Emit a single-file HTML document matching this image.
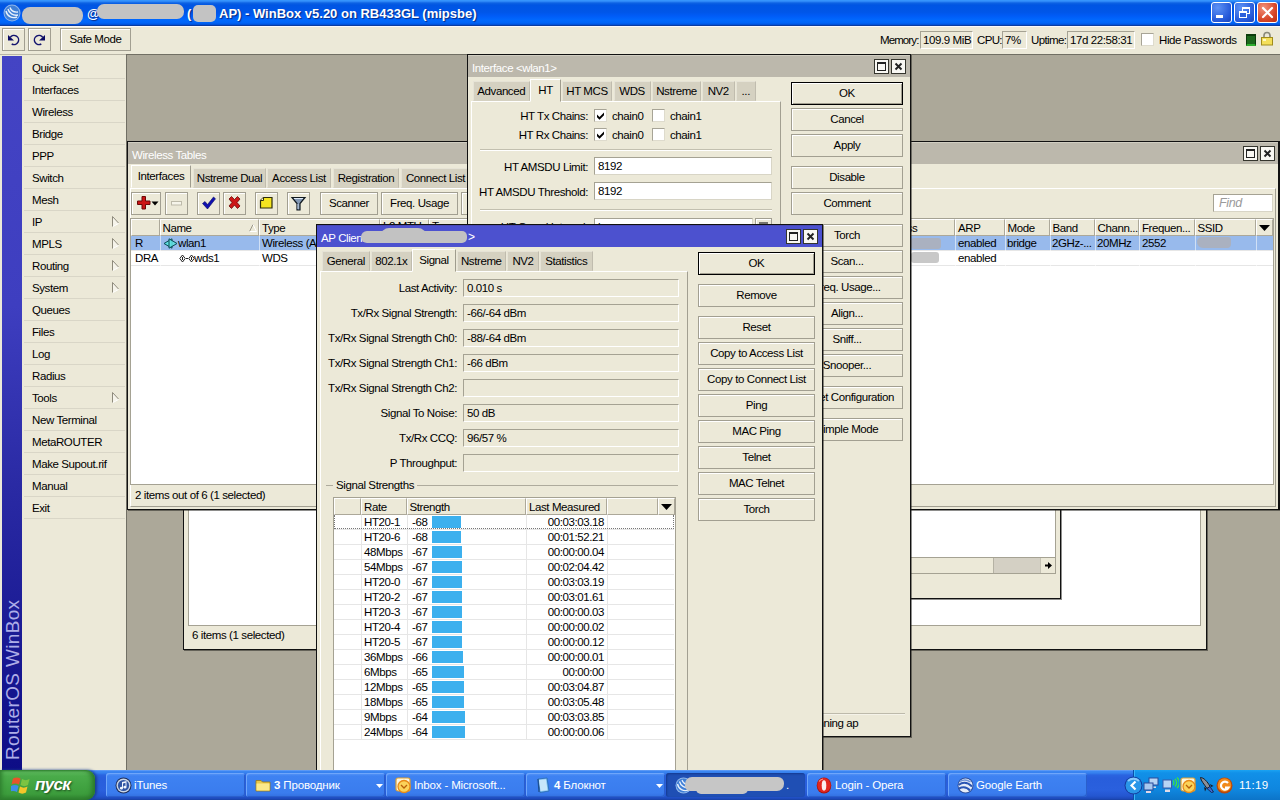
<!DOCTYPE html><html><head><meta charset="utf-8"><title>WinBox</title><style>
*{box-sizing:border-box;margin:0;padding:0}
html,body{width:1280px;height:800px;overflow:hidden;background:#aca899}
body{font-family:"Liberation Sans",sans-serif;font-size:11.5px;letter-spacing:-0.35px;color:#000;position:relative}
.abs{position:absolute}
.t{position:absolute;white-space:nowrap;line-height:14px;height:14px}
.r{text-align:right}
.c{text-align:center}
/* XP title */
#xpt{left:0;top:0;width:1280px;height:26px;background:linear-gradient(#3b9bff 0,#2c86f6 1.500px,#0d62e3 3px,#0055e3 5px,#0056e8 12px,#005cf7 16px,#0068fe 20px,#0064f6 23px,#0052dc 24.500px,#0a3ca0 25.500px,#0a3ca0 26px)}
#xpt .tt{left:437px;top:6px;color:#fff;font-weight:bold;font-size:13px;letter-spacing:0;line-height:16px;height:16px;text-shadow:1px 1px 1px #0a2a80}
.blob{position:absolute;background:#c3c3c3;border-radius:6px}
.xb{position:absolute;top:2px;width:21px;height:21px;border:1px solid #fff;border-radius:3px;background:radial-gradient(circle at 30% 25%,#5d92f5,#2457d8 70%,#1a44b8)}
.xb.cl{background:radial-gradient(circle at 30% 25%,#f0917a,#d8482a 60%,#b92f12)}
/* toolbar */
#tb{left:0;top:26px;width:1280px;height:28px;background:#ece9d8;box-shadow:inset 0 1px 0 #f8f8fc}
.btn{position:absolute;background:#ece9d8;border:1px solid #a29f91;box-shadow:inset 1px 1px 0 #fff;text-align:center;line-height:21px;height:23px;white-space:nowrap}
.btn.def{border-color:#000;box-shadow:inset 1px 1px 0 #fff,inset -1px -1px 0 #a29f91}
.fld{position:absolute;height:18px;background:#ece9d8;border:1px solid;border-color:#a5a293 #fff #fff #a5a293;line-height:16px;padding-left:3px;white-space:nowrap;overflow:hidden}
.fld.w{background:#fff;border-color:#a5a293 #d8d5c6 #d8d5c6 #a5a293}
/* sidebar */
#sb{left:2px;top:56px;width:20px;height:714px;background:linear-gradient(#4444c4 0,#3e3ec0 35%,#2a2aa4 60%,#0d0d86 100%)}
#sbt{left:3px;top:760px;width:220px;height:20px;transform-origin:0 0;transform:rotate(-90deg);color:#aeaee8;font-size:19px;letter-spacing:0.35px;line-height:20px;white-space:nowrap}
#menu{left:22px;top:55px;width:104px;height:715px;background:#ece9d8}
.mi{position:absolute;left:2px;width:101px;height:22px;border-bottom:1px solid #d9d6c7;padding-left:8px;line-height:22px;font-size:11.5px;letter-spacing:-0.4px}
.mi svg{position:absolute;right:6px;top:5px}
/* windows */
.win{position:absolute;background:#ece9d8;border:1px solid #111;box-shadow:1px 1px 0 rgba(30,30,25,.5);overflow:hidden}
.wt{position:absolute;left:0;top:0;right:0;height:22px;background:#bcb8ac;box-shadow:inset 0 1px 0 #d0cdc1;color:#fff;font-size:11.5px;letter-spacing:-0.4px;line-height:26px;padding-left:4px;white-space:nowrap}
.wt.act{background:#4c51cf;box-shadow:inset 0 1px 0 #4a4ab4;color:#fff}
.wb{position:absolute;top:4px;width:15px;height:15px;background:#f9f8f3;border:1px solid #35352d}
.wb.mx:after{content:"";box-sizing:border-box;position:absolute;left:2px;top:2px;width:9px;height:9px;border:1px solid #222;border-top-width:2px}
.wb svg{position:absolute;left:2px;top:2px}
.tab{position:absolute;height:20px;margin-top:-1px;background:#d5d1c1;border:1px solid;border-color:#e6e3d6 #c0bcae #d5d1c1 #e6e3d6;text-align:center;line-height:19px;font-size:11.5px;letter-spacing:-0.4px;white-space:nowrap}
.tab.on{background:#ece9d8;height:23px;margin-top:0;border-color:#fff #9f9c8e #ece9d8 #fff;line-height:21px;z-index:2}
.pane{position:absolute;border:1px solid;border-color:#fff #a29f91 #a29f91 #fff;background:#ece9d8}
.th{position:absolute;height:17px;background:#ece9d8;border:1px solid;border-color:#fff #aca899 #aca899 #fff;line-height:16px;padding-left:2px;white-space:nowrap;overflow:hidden;font-size:11.5px;letter-spacing:-0.4px}
.tbl{position:absolute;background:#fff;border:1px solid #a5a293;overflow:hidden}
.row{position:absolute;left:0;right:0;height:15px;border-bottom:1px solid #e6e6e6;line-height:14px;font-size:11.5px;letter-spacing:-0.4px;white-space:nowrap}
.row span{position:absolute;top:0;height:14px}
.row.sel{background:#98baec}
.vl{position:absolute;width:1px;background:#e6e6e6}
.bar{position:absolute;top:1px;height:12px;background:#3cb0ee}
.cb{position:absolute;width:13px;height:13px;background:#fff;border:1px solid;border-color:#a7a496 #dedbcd #dedbcd #a7a496}
.sep{position:absolute;height:2px;border-top:1px solid #c2bfaf;border-bottom:1px solid #fff}
/* taskbar */
#tk{left:0;top:770px;width:1280px;height:30px;background:linear-gradient(#79a9f6 0,#3d88f3 1px,#3580ee 3px,#2a64e1 5px,#285edc 8px,#2a60de 20px,#2456d0 26px,#1c48b8 29px,#183f9e 30px)}
#start{left:0;top:770px;width:95px;height:30px;border-radius:0 9px 9px 0;background:linear-gradient(#3c8f3c 0,#5dba5d 2px,#4aab4a 6px,#42a442 15px,#3c9c3c 24px,#2f802f 30px);box-shadow:inset -4px 0 5px -1px #2a762a,inset 3px 0 4px -1px #2f7f2f,2px 0 3px #1a3f90}
#start .t{left:35px;top:6px;color:#fff;font-weight:bold;font-style:italic;font-size:17px;letter-spacing:-0.7px;line-height:18px;height:18px;text-shadow:1px 1px 2px #1d4b1d}
.tkb{position:absolute;top:773px;height:24px;width:139px;border-radius:3px;background:linear-gradient(#5a98f8 0,#3e82f2 3px,#3a7cee 20px,#326fe0 24px);color:#fff;font-size:11.5px;letter-spacing:-0.15px;line-height:24px;white-space:nowrap;overflow:hidden;box-shadow:inset 1px 1px 0 #6ea6fb,inset -1px -1px 0 #2a5fcc}
.tkb.act{background:#1f4fb4;box-shadow:inset 1px 1px 2px #143a90}
.tkb b{position:absolute;left:28px;top:0;font-weight:normal}
#tray{left:1133px;top:770px;width:147px;height:30px;background:linear-gradient(#1ba3f2 0,#1190e8 3px,#0f86de 20px,#0c74c8 30px);border-left:1px solid #0a4fa8;box-shadow:inset 1px 0 0 #3bb6fa}
</style></head><body>
<div class="abs" style="left:126px;top:54px;width:1154px;height:716px;border-left:1px solid #716f64;border-top:1px solid #716f64"></div>
<div class="win" style="left:183px;top:300px;width:1024px;height:350px">
<div class="tbl" style="left:4px;top:20px;width:1013px;height:305px;border-color:#a5a293"></div>
<div class="t" style="left:8px;top:327px;font-size:11.500px;letter-spacing:-0.4px">6 items (1 selected)</div>
</div>
<div class="win" style="left:400px;top:380px;width:661px;height:219px">
<div class="tbl" style="left:4px;top:20px;width:651px;height:173px;border-color:#a5a293"></div>
<div class="abs" style="left:5px;top:176px;width:649px;height:16px;background:#ece9d8;border-top:1px solid #a5a293"></div>
<div class="abs" style="left:592px;top:177px;width:47px;height:15px;background:#d4d0c4;border-left:1px solid #b5b2a4"></div>
<div class="abs" style="left:639px;top:177px;width:15px;height:15px;background:#ece9d8;border-left:1px solid #c5c2b4"><svg width="14" height="15"><path d="M4 6.500h3V4l4 3.500-4 3.500V8.500H4z" fill="#000"/></svg></div>
</div>
<div class="abs" id="xpt">
<svg class="abs" style="left:3px;top:4px" width="18" height="18" viewBox="0 0 18 18"><circle cx="9" cy="9" r="8.5" fill="#8fb6ea"/><circle cx="9" cy="9" r="7.5" fill="#3f7fd6"/><path d="M3 7c1 5 6 8 11 6M5 5c1 4 5 7 10 6M7 3.500c1 3 4 5 8 4.500" stroke="#e8f1fc" stroke-width="1.400" fill="none"/></svg>
<div class="blob" style="left:22px;top:7px;width:61px;height:17px;border-radius:8px"></div>
<div class="t tt" style="left:87px">@</div>
<div class="blob" style="left:97px;top:4px;width:87px;height:15px;border-radius:7px"></div>
<div class="t tt" style="left:187px">(</div>
<div class="blob" style="left:193px;top:5px;width:23px;height:17px;border-radius:5px"></div>
<div class="t tt" style="left:219px">AP) - WinBox v5.20 on RB433GL (mipsbe)</div>
<div class="xb" style="left:1211px"><svg width="19" height="19"><rect x="4" y="12" width="7" height="3" fill="#fff"/></svg></div>
<div class="xb" style="left:1234px"><svg width="19" height="19"><rect x="7.500" y="4.500" width="7" height="6" fill="none" stroke="#fff"/><rect x="7" y="4" width="8" height="2" fill="#fff"/><rect x="4.500" y="8.500" width="7" height="6" fill="#2d60dc" stroke="#fff"/><rect x="4" y="8" width="8" height="2" fill="#fff"/></svg></div>
<div class="xb cl" style="left:1257px"><svg width="19" height="19"><path d="M5 5l9 9M14 5l-9 9" stroke="#fff" stroke-width="2.200" stroke-linecap="round"/></svg></div>
</div>
<div class="abs" id="tb">
<div class="btn" style="left:2px;top:2px;width:23px"><svg width="21" height="20" viewBox="0 0 21 20"><path d="M7.200 8.400A4.600 4.600 0 1 1 8.700 15" fill="none" stroke="#14146e" stroke-width="1.500"/><path d="M5 6v5.500h6z" fill="#0c0c64"/></svg></div>
<div class="btn" style="left:28px;top:2px;width:23px"><svg width="21" height="20" viewBox="0 0 21 20"><path d="M13.800 8.400A4.600 4.600 0 1 0 12.300 15" fill="none" stroke="#14146e" stroke-width="1.500"/><path d="M16 6v5.500h-6z" fill="#0c0c64"/></svg></div>
<div class="btn" style="left:60px;top:2px;width:71px;font-size:11.5px;letter-spacing:-0.4px">Safe Mode</div>
<div class="t" style="left:880px;top:7px;font-size:11.5px;letter-spacing:-0.9px">Memory:</div>
<div class="fld" style="left:920px;top:5px;width:53px;font-size:11.5px;letter-spacing:-0.4px;padding-left:2px">109.9 MiB</div>
<div class="t" style="left:977px;top:7px;font-size:11.5px;letter-spacing:-0.65px">CPU:</div>
<div class="fld" style="left:1002px;top:5px;width:25px;font-size:11.5px;letter-spacing:-0.4px;padding-left:2px">7%</div>
<div class="t" style="left:1031px;top:7px;font-size:11.5px;letter-spacing:-0.6px">Uptime:</div>
<div class="fld" style="left:1067px;top:5px;width:68px;font-size:11.5px;letter-spacing:-0.4px;padding-left:2px">17d 22:58:31</div>
<div class="cb" style="left:1141px;top:7px"></div>
<div class="t" style="left:1159px;top:7px;font-size:11.5px;letter-spacing:-0.4px">Hide Passwords</div>
<div class="abs" style="left:1246px;top:8px;width:10px;height:12px;background:#1d681d;border:1px solid #0c3c0c;border-top:2px solid #0c3c0c;border-bottom:2px solid #2fae2f"></div>
<svg class="abs" style="left:1260px;top:5px" width="14" height="15" viewBox="0 0 14 15"><path d="M4 7V4.500a3 3 0 0 1 6 0V7" fill="none" stroke="#8a8a7a" stroke-width="1.600"/><rect x="1.500" y="6.500" width="11" height="7.500" fill="#f4df5a" stroke="#a08c1c"/><rect x="3" y="8" width="3" height="2" fill="#fdf7c4"/></svg>
</div>
<div class="abs" style="left:0;top:54px;width:126px;height:1px;background:#b9b6a7"></div>
<div class="abs" style="left:0;top:55px;width:126px;height:715px;background:#ece9d8"></div>
<div class="abs" id="sb"></div><div class="abs" id="sbt">RouterOS WinBox</div>
<div class="abs" id="menu">
<div class="mi" style="top:2px">Quick Set</div>
<div class="mi" style="top:24px">Interfaces</div>
<div class="mi" style="top:46px">Wireless</div>
<div class="mi" style="top:68px">Bridge</div>
<div class="mi" style="top:90px">PPP</div>
<div class="mi" style="top:112px">Switch</div>
<div class="mi" style="top:134px">Mesh</div>
<div class="mi" style="top:156px">IP<svg width="7" height="11" viewBox="0 0 7 11"><path d="M.5 .5v10L6.500 7z" fill="#f6f4ea"/><path d="M.5 10.500V.5L6.500 7" fill="none" stroke="#8e8b7c"/><path d="M6.500 7.500L1 10.500" stroke="#fff"/></svg></div>
<div class="mi" style="top:178px">MPLS<svg width="7" height="11" viewBox="0 0 7 11"><path d="M.5 .5v10L6.500 7z" fill="#f6f4ea"/><path d="M.5 10.500V.5L6.500 7" fill="none" stroke="#8e8b7c"/><path d="M6.500 7.500L1 10.500" stroke="#fff"/></svg></div>
<div class="mi" style="top:200px">Routing<svg width="7" height="11" viewBox="0 0 7 11"><path d="M.5 .5v10L6.500 7z" fill="#f6f4ea"/><path d="M.5 10.500V.5L6.500 7" fill="none" stroke="#8e8b7c"/><path d="M6.500 7.500L1 10.500" stroke="#fff"/></svg></div>
<div class="mi" style="top:222px">System<svg width="7" height="11" viewBox="0 0 7 11"><path d="M.5 .5v10L6.500 7z" fill="#f6f4ea"/><path d="M.5 10.500V.5L6.500 7" fill="none" stroke="#8e8b7c"/><path d="M6.500 7.500L1 10.500" stroke="#fff"/></svg></div>
<div class="mi" style="top:244px">Queues</div>
<div class="mi" style="top:266px">Files</div>
<div class="mi" style="top:288px">Log</div>
<div class="mi" style="top:310px">Radius</div>
<div class="mi" style="top:332px">Tools<svg width="7" height="11" viewBox="0 0 7 11"><path d="M.5 .5v10L6.500 7z" fill="#f6f4ea"/><path d="M.5 10.500V.5L6.500 7" fill="none" stroke="#8e8b7c"/><path d="M6.500 7.500L1 10.500" stroke="#fff"/></svg></div>
<div class="mi" style="top:354px">New Terminal</div>
<div class="mi" style="top:376px">MetaROUTER</div>
<div class="mi" style="top:398px">Make Supout.rif</div>
<div class="mi" style="top:420px">Manual</div>
<div class="mi" style="top:442px">Exit</div>
</div>
<div class="win" style="left:127px;top:141px;width:1153px;height:369px;border-right-width:2px">
<div class="wt">Wireless Tables</div>
<div class="wb mx" style="left:1115px;top:4px"></div>
<div class="wb" style="left:1132px;top:4px"><svg width="13" height="13" style="left:0;top:0"><path d="M3.500 3.500l6 6M9.500 3.500l-6 6" stroke="#222" stroke-width="1.900"/></svg></div>
<div class="tab on" style="left:3px;top:23px;width:60px">Interfaces</div>
<div class="tab" style="left:65px;top:27px;width:73px">Nstreme Dual</div>
<div class="tab" style="left:139px;top:27px;width:64px">Access List</div>
<div class="tab" style="left:205px;top:27px;width:66px">Registration</div>
<div class="tab" style="left:273px;top:27px;width:69px">Connect List</div>
<div class="pane" style="left:2px;top:46px;width:1146px;height:319px"></div>
<div class="btn" style="left:3px;top:50px;width:30px;height:23px"><svg width="28" height="21"><path d="M5.500 8h4.500V3.500h3.500V8H18v3.500h-4.500V16H10v-4.500H5.500z" fill="#cc1414" stroke="#6a0808" stroke-width="1"/><path d="M19.500 8.500h7l-3.500 4z" fill="#000"/></svg></div>
<div class="btn" style="left:37px;top:50px;width:23px;height:23px"><svg width="21" height="21"><rect x="5.500" y="8.500" width="10" height="3.500" fill="#f6f4ea" stroke="#bdbaaa"/></svg></div>
<div class="btn" style="left:69px;top:50px;width:23px;height:23px"><svg width="21" height="21"><path d="M4.500 10.500l2.500-2 2.500 3L15.500 4l2 1.800L9.500 16z" fill="#1010b0" stroke="#080860" stroke-width="0.600"/></svg></div>
<div class="btn" style="left:95px;top:50px;width:23px;height:23px"><svg width="21" height="21"><path d="M5 6l2.500-2.500 3 3 3-3L16 6l-3 3.500 3 3.500-2.500 2.500-3-3.500-3 3.500L5 13l3-3.500z" fill="#cc1818" stroke="#6a0808" stroke-width="0.800"/></svg></div>
<div class="btn" style="left:127px;top:50px;width:23px;height:23px"><svg width="21" height="21"><path d="M4.500 7.500l3-3h8.500v10.500H4.500z" fill="#f4e420" stroke="#2c2c0c" stroke-width="1.200"/><path d="M4.500 7.500h3v-3" fill="#fffbd0" stroke="#2c2c0c"/></svg></div>
<div class="btn" style="left:159px;top:50px;width:23px;height:23px"><svg width="21" height="21"><path d="M4 4.500h13l-5 6v6.500h-3v-6.500z" fill="#8298b4" stroke="#10181f" stroke-width="1.200"/><path d="M6 5.500h9" stroke="#dfeaf8"/><path d="M10 11v5" stroke="#c4d4e8"/></svg></div>
<div class="btn" style="left:192px;top:50px;width:58px;height:23px;line-height:21px;font-size:11.5px;letter-spacing:-0.4px">Scanner</div>
<div class="btn" style="left:253px;top:50px;width:77px;height:23px;line-height:21px;font-size:11.5px;letter-spacing:-0.4px">Freq. Usage</div>
<div class="btn" style="left:333px;top:50px;width:60px;height:23px"></div>
<div class="fld w" style="left:1085px;top:52px;width:60px;font-style:italic;color:#9a9a9a;font-size:12.500px;padding-left:5px">Find</div>
<div class="tbl" style="left:2px;top:76px;width:1144px;height:267px"></div>
<div class="th" style="left:3px;top:77px;width:28.5px"></div>
<div class="th" style="left:31.5px;top:77px;width:99.5px">Name</div>
<div class="th" style="left:131px;top:77px;width:121px">Type</div>
<div class="th" style="left:252px;top:77px;width:49px;line-height:13px">L2 MTU</div>
<div class="th" style="left:301px;top:77px;width:91px;line-height:13px">Tx</div>
<div class="th" style="left:392px;top:77px;width:328.5px"></div>
<div class="th" style="left:720.5px;top:77px;width:106.5px">MAC Address</div>
<div class="th" style="left:827px;top:77px;width:49.5px">ARP</div>
<div class="th" style="left:876.5px;top:77px;width:45px">Mode</div>
<div class="th" style="left:921.5px;top:77px;width:45px">Band</div>
<div class="th" style="left:966.5px;top:77px;width:44.5px">Chann...</div>
<div class="th" style="left:1011px;top:77px;width:55.5px">Frequen...</div>
<div class="th" style="left:1066.5px;top:77px;width:61.5px">SSID</div>
<div class="th" style="left:1128px;top:77px;width:17px"></div>
<svg class="abs" style="left:121px;top:82px" width="8" height="8" viewBox="0 0 8 8"><path d="M.5 7.500L4 .5" stroke="#9a9788" fill="none"/><path d="M4 .5L7.500 7.500H.5" stroke="#fff" fill="none"/></svg>
<svg class="abs" style="left:1131px;top:83px" width="11" height="6"><path d="M0 0h11L5.500 6z" fill="#000"/></svg>
<div class="row sel" style="left:3px;top:94px;width:1142px"></div>
<div class="row" style="left:3px;top:109px;width:1142px"></div>
<div class="vl" style="left:31.5px;top:94px;height:30px;background:rgba(255,255,255,.55)"></div>
<div class="vl" style="left:131px;top:94px;height:30px;background:rgba(255,255,255,.55)"></div>
<div class="vl" style="left:252px;top:94px;height:30px;background:rgba(255,255,255,.55)"></div>
<div class="vl" style="left:301px;top:94px;height:30px;background:rgba(255,255,255,.55)"></div>
<div class="vl" style="left:827px;top:94px;height:30px;background:rgba(255,255,255,.55)"></div>
<div class="vl" style="left:876.5px;top:94px;height:30px;background:rgba(255,255,255,.55)"></div>
<div class="vl" style="left:921.5px;top:94px;height:30px;background:rgba(255,255,255,.55)"></div>
<div class="vl" style="left:966.5px;top:94px;height:30px;background:rgba(255,255,255,.55)"></div>
<div class="vl" style="left:1011px;top:94px;height:30px;background:rgba(255,255,255,.55)"></div>
<div class="vl" style="left:1066.5px;top:94px;height:30px;background:rgba(255,255,255,.55)"></div>
<div class="vl" style="left:1128px;top:94px;height:30px;background:rgba(255,255,255,.55)"></div>
<div class="t" style="left:7px;top:94px;font-size:11.5px;letter-spacing:-0.4px;">R</div>
<div class="t" style="left:50px;top:94px;font-size:11.5px;letter-spacing:-0.4px;">wlan1</div>
<div class="t" style="left:134px;top:94px;font-size:11.5px;letter-spacing:-0.4px;">Wireless (Atheros AR9300)</div>
<div class="t" style="left:830px;top:94px;font-size:11.5px;letter-spacing:-0.4px;">enabled</div>
<div class="t" style="left:879px;top:94px;font-size:11.5px;letter-spacing:-0.4px;">bridge</div>
<div class="t" style="left:924px;top:94px;font-size:11.5px;letter-spacing:-0.4px;">2GHz-...</div>
<div class="t" style="left:969px;top:94px;font-size:11.5px;letter-spacing:-0.4px;">20MHz</div>
<div class="t" style="left:1014px;top:94px;font-size:11.5px;letter-spacing:-0.4px;">2552</div>
<div class="t" style="left:7px;top:109px;font-size:11.5px;letter-spacing:-0.4px;">DRA</div>
<div class="t" style="left:66px;top:109px;font-size:11.5px;letter-spacing:-0.4px;">wds1</div>
<div class="t" style="left:134px;top:109px;font-size:11.5px;letter-spacing:-0.4px;">WDS</div>
<div class="t" style="left:830px;top:109px;font-size:11.5px;letter-spacing:-0.4px;">enabled</div>
<div class="blob" style="left:1069px;top:95px;width:34px;height:11px;border-radius:5px 3px 4px 6px;background:#aab1c0"></div>
<div class="blob" style="left:783px;top:96px;width:30px;height:11px;border-radius:3px;background:#aab1c0"></div>
<div class="blob" style="left:783px;top:110px;width:28px;height:11px;border-radius:3px;background:#c8c8c8"></div>
<svg class="abs" style="left:34.5px;top:95.5px" width="15" height="11" viewBox="0 0 15 11"><path d="M9 .8L1 5.500l8 4.700z" fill="#5ee0e0" stroke="#0c4a55" stroke-width="1"/><path d="M6 .8L14 5.500l-8 4.700z" fill="#5ee0e0" fill-opacity=".85" stroke="#0c4a55" stroke-width="1"/></svg>
<svg class="abs" style="left:51px;top:111.5px" width="16" height="9" viewBox="0 0 16 9"><path d="M3.500 1L.8 4.500 3.500 8 6.200 4.500zM12.500 1L9.800 4.500 12.500 8 15.200 4.500z" fill="#fff" stroke="#222" stroke-width="1"/><path d="M7 4.500h2" stroke="#222"/><path d="M3.500 3v3M12.500 3v3" stroke="#222"/></svg>
<div class="t" style="left:7px;top:346px;font-size:11.5px;letter-spacing:-0.4px">2 items out of 6 (1 selected)</div>
</div>
<div class="win" style="left:467px;top:54px;width:444px;height:683px">
<div class="wt">Interface &lt;wlan1&gt;</div>
<div class="wb mx" style="left:406px;top:4px"></div>
<div class="wb" style="left:423px;top:4px"><svg width="13" height="13" style="left:0;top:0"><path d="M3.500 3.500l6 6M9.500 3.500l-6 6" stroke="#222" stroke-width="1.900"/></svg></div>
<div class="tab" style="left:4.5px;top:27px;width:57.5px">Advanced</div>
<div class="tab on" style="left:62px;top:24px;width:31px">HT</div>
<div class="tab" style="left:94px;top:27px;width:50px">HT MCS</div>
<div class="tab" style="left:145.5px;top:27px;width:37px">WDS</div>
<div class="tab" style="left:184px;top:27px;width:49px">Nstreme</div>
<div class="tab" style="left:234px;top:27px;width:32.5px">NV2</div>
<div class="tab" style="left:267.5px;top:27px;width:20.5px">...</div>
<div class="pane" style="left:3px;top:46px;width:310px;height:610px"></div>
<div class="t r" style="left:-80px;top:54px;width:200px;font-size:11.5px;letter-spacing:-0.4px">HT Tx Chains:</div>
<div class="t r" style="left:-80px;top:73px;width:200px;font-size:11.5px;letter-spacing:-0.4px">HT Rx Chains:</div>
<div class="cb" style="left:126px;top:54px"><svg width="11" height="11"><path d="M2 4.500l2.500 2.500L9 2.500v2.800L4.500 9.800 2 7.300z" fill="#000"/></svg></div>
<div class="t" style="left:144px;top:54px;font-size:11.5px;letter-spacing:-0.4px;">chain0</div>
<div class="cb" style="left:184px;top:54px"></div>
<div class="t" style="left:202px;top:54px;font-size:11.5px;letter-spacing:-0.4px;">chain1</div>
<div class="cb" style="left:126px;top:73px"><svg width="11" height="11"><path d="M2 4.500l2.500 2.500L9 2.500v2.800L4.500 9.800 2 7.300z" fill="#000"/></svg></div>
<div class="t" style="left:144px;top:73px;font-size:11.5px;letter-spacing:-0.4px;">chain0</div>
<div class="cb" style="left:184px;top:73px"></div>
<div class="t" style="left:202px;top:73px;font-size:11.5px;letter-spacing:-0.4px;">chain1</div>
<div class="sep" style="left:12px;top:94px;width:292px"></div>
<div class="t r" style="left:-80px;top:105px;width:200px;font-size:11.5px;letter-spacing:-0.4px">HT AMSDU Limit:</div>
<div class="fld w" style="left:126px;top:102px;width:178px;font-size:11.5px;letter-spacing:-0.4px">8192</div>
<div class="t r" style="left:-80px;top:130px;width:200px;font-size:11.5px;letter-spacing:-0.4px">HT AMSDU Threshold:</div>
<div class="fld w" style="left:126px;top:127px;width:178px;font-size:11.5px;letter-spacing:-0.4px">8192</div>
<div class="sep" style="left:12px;top:154px;width:292px"></div>
<div class="t r" style="left:-80px;top:165px;width:200px;font-size:11.5px;letter-spacing:-0.4px">HT Guard Interval:</div>
<div class="fld w" style="left:126px;top:163px;width:159px;font-size:11.5px;letter-spacing:-0.4px">long</div>
<div class="btn" style="left:287px;top:163px;width:17px;height:18px"><svg width="15" height="16"><path d="M3 4h9M4 7h7l-3.500 4z" stroke="#000" fill="#000"/></svg></div>
<div class="btn def" style="left:323px;top:27px;width:112px;font-size:11.5px;letter-spacing:-0.4px">OK</div>
<div class="btn" style="left:323px;top:53px;width:112px;font-size:11.5px;letter-spacing:-0.4px">Cancel</div>
<div class="btn" style="left:323px;top:79px;width:112px;font-size:11.5px;letter-spacing:-0.4px">Apply</div>
<div class="btn" style="left:323px;top:111px;width:112px;font-size:11.5px;letter-spacing:-0.4px">Disable</div>
<div class="btn" style="left:323px;top:137px;width:112px;font-size:11.5px;letter-spacing:-0.4px">Comment</div>
<div class="btn" style="left:323px;top:169px;width:112px;font-size:11.5px;letter-spacing:-0.4px">Torch</div>
<div class="btn" style="left:323px;top:195px;width:112px;font-size:11.5px;letter-spacing:-0.4px">Scan...</div>
<div class="btn" style="left:323px;top:221px;width:112px;font-size:11.5px;letter-spacing:-0.4px">Freq. Usage...</div>
<div class="btn" style="left:323px;top:247px;width:112px;font-size:11.5px;letter-spacing:-0.4px">Align...</div>
<div class="btn" style="left:323px;top:273px;width:112px;font-size:11.5px;letter-spacing:-0.4px">Sniff...</div>
<div class="btn" style="left:323px;top:299px;width:112px;font-size:11.5px;letter-spacing:-0.4px">Snooper...</div>
<div class="btn" style="left:323px;top:331px;width:112px;font-size:11.5px;letter-spacing:-0.4px">Reset Configuration</div>
<div class="btn" style="left:323px;top:363px;width:112px;font-size:11.5px;letter-spacing:-0.4px">Simple Mode</div>
<div class="abs" style="left:3px;top:658px;width:434px;height:1px;background:#bdbaab"></div>
<div class="abs" style="left:3px;top:659px;width:434px;height:1px;background:#f5f3e9"></div>
<div class="t" style="left:340px;top:661px;font-size:11.5px;letter-spacing:-0.4px;letter-spacing:-0.4px">running ap</div>
</div>
<div class="win" style="left:316px;top:224px;width:507px;height:600px">
<div class="wt act">AP Client &lt;</div>
<div class="blob" style="left:44px;top:6px;width:106px;height:12px;border-radius:6px 5px 5px 6px;background:#c2c2c2"></div>
<div class="blob" style="left:64px;top:3px;width:45px;height:8px;border-radius:14px 14px 0 0;background:#c2c2c2"></div>
<div class="t" style="left:151px;top:5px;color:#fff;font-size:12px">&gt;</div>
<div class="wb mx" style="left:469px;top:4px"></div>
<div class="wb" style="left:486px;top:4px"><svg width="13" height="13" style="left:0;top:0"><path d="M3.500 3.500l6 6M9.500 3.500l-6 6" stroke="#222" stroke-width="1.900"/></svg></div>
<div class="tab" style="left:5px;top:27px;width:47.5px">General</div>
<div class="tab" style="left:53.5px;top:27px;width:41.5px">802.1x</div>
<div class="tab on" style="left:95px;top:24px;width:44px">Signal</div>
<div class="tab" style="left:140px;top:27px;width:48.5px">Nstreme</div>
<div class="tab" style="left:190px;top:27px;width:32px">NV2</div>
<div class="tab" style="left:223px;top:27px;width:52.5px">Statistics</div>
<div class="pane" style="left:3px;top:46px;width:368px;height:560px"></div>
<div class="t r" style="left:-60px;top:56px;width:200px;font-size:11.5px;letter-spacing:-0.4px">Last Activity:</div>
<div class="fld" style="left:146px;top:54px;width:216px;font-size:11.5px;letter-spacing:-0.4px">0.010 s</div>
<div class="t r" style="left:-60px;top:81px;width:200px;font-size:11.5px;letter-spacing:-0.4px">Tx/Rx Signal Strength:</div>
<div class="fld" style="left:146px;top:79px;width:216px;font-size:11.5px;letter-spacing:-0.4px">-66/-64 dBm</div>
<div class="t r" style="left:-60px;top:106px;width:200px;font-size:11.5px;letter-spacing:-0.4px">Tx/Rx Signal Strength Ch0:</div>
<div class="fld" style="left:146px;top:104px;width:216px;font-size:11.5px;letter-spacing:-0.4px">-88/-64 dBm</div>
<div class="t r" style="left:-60px;top:131px;width:200px;font-size:11.5px;letter-spacing:-0.4px">Tx/Rx Signal Strength Ch1:</div>
<div class="fld" style="left:146px;top:129px;width:216px;font-size:11.5px;letter-spacing:-0.4px">-66 dBm</div>
<div class="t r" style="left:-60px;top:156px;width:200px;font-size:11.5px;letter-spacing:-0.4px">Tx/Rx Signal Strength Ch2:</div>
<div class="fld" style="left:146px;top:154px;width:216px;font-size:11.5px;letter-spacing:-0.4px"></div>
<div class="t r" style="left:-60px;top:181px;width:200px;font-size:11.5px;letter-spacing:-0.4px">Signal To Noise:</div>
<div class="fld" style="left:146px;top:179px;width:216px;font-size:11.5px;letter-spacing:-0.4px">50 dB</div>
<div class="t r" style="left:-60px;top:206px;width:200px;font-size:11.5px;letter-spacing:-0.4px">Tx/Rx CCQ:</div>
<div class="fld" style="left:146px;top:204px;width:216px;font-size:11.5px;letter-spacing:-0.4px">96/57 %</div>
<div class="t r" style="left:-60px;top:231px;width:200px;font-size:11.5px;letter-spacing:-0.4px">P Throughput:</div>
<div class="fld" style="left:146px;top:229px;width:216px;font-size:11.5px;letter-spacing:-0.4px"></div>
<div class="abs" style="left:9px;top:260px;width:352px;height:1px;background:#aeab9d"></div>
<div class="t" style="left:16px;top:253px;font-size:11.5px;letter-spacing:-0.4px;background:#ece9d8;padding:0 3px">Signal Strengths</div>
<div class="tbl" style="left:16px;top:272px;width:343px;height:300px"></div>
<div class="th" style="left:17px;top:273px;width:27px"></div>
<div class="th" style="left:44px;top:273px;width:45.5px">Rate</div>
<div class="th" style="left:89.5px;top:273px;width:119.5px">Strength</div>
<div class="th" style="left:209px;top:273px;width:80.5px">Last Measured</div>
<div class="th" style="left:289.5px;top:273px;width:51.5px"></div>
<div class="th" style="left:341px;top:273px;width:17px"></div>
<svg class="abs" style="left:344px;top:279px" width="11" height="6"><path d="M0 0h11L5.500 6z" fill="#000"/></svg>
<div class="vl" style="left:44px;top:290px;height:225px"></div>
<div class="vl" style="left:89.5px;top:290px;height:225px"></div>
<div class="vl" style="left:209px;top:290px;height:225px"></div>
<div class="vl" style="left:289.5px;top:290px;height:225px"></div>
<div class="row" style="left:17px;top:290px;width:340px"><span style="left:30px">HT20-1</span><span style="left:78px">-68</span><div class="bar" style="left:98px;width:29px"></div><span style="left:191px;width:79px;text-align:right">00:03:03.18</span></div>
<div class="row" style="left:17px;top:305px;width:340px"><span style="left:30px">HT20-6</span><span style="left:78px">-68</span><div class="bar" style="left:98px;width:29px"></div><span style="left:191px;width:79px;text-align:right">00:01:52.21</span></div>
<div class="row" style="left:17px;top:320px;width:340px"><span style="left:30px">48Mbps</span><span style="left:78px">-67</span><div class="bar" style="left:98px;width:30px"></div><span style="left:191px;width:79px;text-align:right">00:00:00.04</span></div>
<div class="row" style="left:17px;top:335px;width:340px"><span style="left:30px">54Mbps</span><span style="left:78px">-67</span><div class="bar" style="left:98px;width:30px"></div><span style="left:191px;width:79px;text-align:right">00:02:04.42</span></div>
<div class="row" style="left:17px;top:350px;width:340px"><span style="left:30px">HT20-0</span><span style="left:78px">-67</span><div class="bar" style="left:98px;width:30px"></div><span style="left:191px;width:79px;text-align:right">00:03:03.19</span></div>
<div class="row" style="left:17px;top:365px;width:340px"><span style="left:30px">HT20-2</span><span style="left:78px">-67</span><div class="bar" style="left:98px;width:30px"></div><span style="left:191px;width:79px;text-align:right">00:03:01.61</span></div>
<div class="row" style="left:17px;top:380px;width:340px"><span style="left:30px">HT20-3</span><span style="left:78px">-67</span><div class="bar" style="left:98px;width:30px"></div><span style="left:191px;width:79px;text-align:right">00:00:00.03</span></div>
<div class="row" style="left:17px;top:395px;width:340px"><span style="left:30px">HT20-4</span><span style="left:78px">-67</span><div class="bar" style="left:98px;width:30px"></div><span style="left:191px;width:79px;text-align:right">00:00:00.02</span></div>
<div class="row" style="left:17px;top:410px;width:340px"><span style="left:30px">HT20-5</span><span style="left:78px">-67</span><div class="bar" style="left:98px;width:30px"></div><span style="left:191px;width:79px;text-align:right">00:00:00.12</span></div>
<div class="row" style="left:17px;top:425px;width:340px"><span style="left:30px">36Mbps</span><span style="left:78px">-66</span><div class="bar" style="left:98px;width:31px"></div><span style="left:191px;width:79px;text-align:right">00:00:00.01</span></div>
<div class="row" style="left:17px;top:440px;width:340px"><span style="left:30px">6Mbps</span><span style="left:78px">-65</span><div class="bar" style="left:98px;width:32px"></div><span style="left:191px;width:79px;text-align:right">00:00:00</span></div>
<div class="row" style="left:17px;top:455px;width:340px"><span style="left:30px">12Mbps</span><span style="left:78px">-65</span><div class="bar" style="left:98px;width:32px"></div><span style="left:191px;width:79px;text-align:right">00:03:04.87</span></div>
<div class="row" style="left:17px;top:470px;width:340px"><span style="left:30px">18Mbps</span><span style="left:78px">-65</span><div class="bar" style="left:98px;width:32px"></div><span style="left:191px;width:79px;text-align:right">00:03:05.48</span></div>
<div class="row" style="left:17px;top:485px;width:340px"><span style="left:30px">9Mbps</span><span style="left:78px">-64</span><div class="bar" style="left:98px;width:33px"></div><span style="left:191px;width:79px;text-align:right">00:03:03.85</span></div>
<div class="row" style="left:17px;top:500px;width:340px"><span style="left:30px">24Mbps</span><span style="left:78px">-64</span><div class="bar" style="left:98px;width:33px"></div><span style="left:191px;width:79px;text-align:right">00:00:00.06</span></div>
<div class="abs" style="left:17px;top:290px;width:340px;height:14px;border:1px dotted #777;border-top:none"></div>
<div class="btn def" style="left:381px;top:27px;width:117px;font-size:11.5px;letter-spacing:-0.4px">OK</div>
<div class="btn" style="left:381px;top:59px;width:117px;font-size:11.5px;letter-spacing:-0.4px">Remove</div>
<div class="btn" style="left:381px;top:91px;width:117px;font-size:11.5px;letter-spacing:-0.4px">Reset</div>
<div class="btn" style="left:381px;top:117px;width:117px;font-size:11.5px;letter-spacing:-0.4px">Copy to Access List</div>
<div class="btn" style="left:381px;top:143px;width:117px;font-size:11.5px;letter-spacing:-0.4px">Copy to Connect List</div>
<div class="btn" style="left:381px;top:169px;width:117px;font-size:11.5px;letter-spacing:-0.4px">Ping</div>
<div class="btn" style="left:381px;top:195px;width:117px;font-size:11.5px;letter-spacing:-0.4px">MAC Ping</div>
<div class="btn" style="left:381px;top:221px;width:117px;font-size:11.5px;letter-spacing:-0.4px">Telnet</div>
<div class="btn" style="left:381px;top:247px;width:117px;font-size:11.5px;letter-spacing:-0.4px">MAC Telnet</div>
<div class="btn" style="left:381px;top:273px;width:117px;font-size:11.5px;letter-spacing:-0.4px">Torch</div>
</div>
<div class="abs" id="tk"></div>
<div class="abs" id="tray"></div>
<div class="abs" id="start"><svg class="abs" style="left:11px;top:5px" width="21" height="20" viewBox="0 0 21 20"><path d="M2 3.500c2.500-1.500 5-1.500 7.500 0l-1.500 6c-2.500-1.500-5-1.500-7.500 0z" fill="#e8542a"/><path d="M11 4c2.500 1.500 5 1.500 7.500 0l-1.500 6c-2.500 1.500-5 1.500-7.500 0z" fill="#7cc442"/><path d="M0 11c2.500-1.500 5-1.500 7.500 0l-1.500 6c-2.500-1.500-5-1.500-7.500 0z" fill="#3f8ee8"/><path d="M9 11.500c2.500 1.500 5 1.500 7.500 0l-1.500 6c-2.500 1.500-5 1.500-7.500 0z" fill="#f4c62a"/></svg><div class="t">пуск</div></div>
<div class="tkb" style="left:106px"><div class="abs" style="left:9px;top:4px;width:17px;height:17px;line-height:0"><svg width="17" height="17" viewBox="0 0 17 17"><circle cx="8.500" cy="8.500" r="8" fill="#1c2c58"/><circle cx="8.500" cy="8.500" r="7" fill="#c9d6e8"/><circle cx="8.500" cy="8.500" r="5.600" fill="#2f55a4"/><path d="M7 5l4.500-1v6.200a1.600 1.300 0 1 1-1-1.200V5.800l-2.500.6v4.800a1.600 1.300 0 1 1-1-1.200z" fill="#eef4fc"/></svg></div><b>iTunes</b></div>
<div class="tkb" style="left:246px"><div class="abs" style="left:9px;top:4px;width:17px;height:17px;line-height:0"><svg width="16" height="16" viewBox="0 0 16 16"><path d="M1 3.500h5l1.500 1.500H15v9H1z" fill="#e8c84a" stroke="#9a7a14" stroke-width="0.800"/><path d="M1.500 6.500h13v7h-13z" fill="#fbe98a"/></svg></div><b><span style='font-weight:bold'>3</span> Проводник</b></div>
<div class="tkb" style="left:386px"><div class="abs" style="left:9px;top:4px;width:17px;height:17px;line-height:0"><svg width="17" height="17" viewBox="0 0 17 17"><rect x="1" y="1" width="14" height="13" rx="2" fill="#fdf6dc" stroke="#e0a030" stroke-width="1.200"/><circle cx="9" cy="9.500" r="6" fill="#fbd35a" stroke="#e88a18" stroke-width="1.300"/><path d="M6 8l3 3 3-3" fill="none" stroke="#b86008" stroke-width="1.300"/></svg></div><b>Inbox - Microsoft...</b></div>
<div class="tkb" style="left:526px"><div class="abs" style="left:9px;top:4px;width:17px;height:17px;line-height:0"><svg width="16" height="16" viewBox="0 0 16 16"><path d="M3 2l9-1 2 13-9 1.500z" fill="#7ec0f0" stroke="#2a6ab0" stroke-width="0.800"/><path d="M4 3l7-.8 1.500 11-7 .8z" fill="#c8e6fb"/><path d="M3 2l1 13" stroke="#1d4f90" stroke-width="1.200"/></svg></div><b><span style='font-weight:bold'>4</span> Блокнот</b></div>
<div class="tkb act" style="left:666px"><div class="abs" style="left:9px;top:4px;width:17px;height:17px;line-height:0"><svg width="17" height="17" viewBox="0 0 17 17"><circle cx="8.500" cy="8.500" r="8" fill="#8fb6ea"/><circle cx="8.500" cy="8.500" r="7" fill="#3f7fd6"/><path d="M2.500 7c1 5 6 8 11 6M4.500 4.500c1 4 5 7 10 6M7 3c1 3 4 5 8 4.500" stroke="#e8f1fc" stroke-width="1.300" fill="none"/></svg></div><b></b></div>
<div class="tkb" style="left:807px"><div class="abs" style="left:9px;top:4px;width:17px;height:17px;line-height:0"><svg width="16" height="17" viewBox="0 0 16 17"><ellipse cx="8" cy="8.500" rx="7.300" ry="8" fill="#a8140f"/><ellipse cx="8" cy="8.300" rx="6.600" ry="7.300" fill="#e2261e"/><ellipse cx="8" cy="8.500" rx="2.300" ry="5.200" fill="#fbeeee"/><path d="M3 4.500a6 6 0 0 1 4-2.500" stroke="#f89a90" stroke-width="1.200" fill="none"/></svg></div><b>Login - Opera</b></div>
<div class="tkb" style="left:948px"><div class="abs" style="left:9px;top:4px;width:17px;height:17px;line-height:0"><svg width="17" height="17" viewBox="0 0 17 17"><circle cx="8.500" cy="8.500" r="8" fill="#2c4f9e"/><circle cx="8.500" cy="8.500" r="7" fill="#e6edf8"/><path d="M1.500 8c4-3 9-3 13.500 1.500M2 11.500c4-2 8-1.500 11 2" stroke="#2a56b4" stroke-width="2" fill="none"/><path d="M3 4.500c3-2 7-2 10.500.5" stroke="#6f93d6" stroke-width="1.500" fill="none"/></svg></div><b>Google Earth</b></div>
<svg class="abs" style="left:376px;top:784px" width="7" height="4"><path d="M0 0h7L3.500 4z" fill="#fff"/></svg>
<svg class="abs" style="left:656px;top:784px" width="7" height="4"><path d="M0 0h7L3.500 4z" fill="#fff"/></svg>
<div class="blob" style="left:685px;top:777px;width:99px;height:14px;border-radius:7px 6px 7px 5px;background:#c6c6c6"></div>
<div class="blob" style="left:696px;top:789px;width:52px;height:5px;border-radius:0 0 6px 6px;background:#c6c6c6"></div>
<div class="t" style="left:786px;top:778px;color:#fff;font-size:11.500px;letter-spacing:0">.</div>
<svg class="abs" style="left:1124px;top:776px" width="19" height="19" viewBox="0 0 19 19"><circle cx="9.500" cy="9.500" r="9" fill="#16389a"/><circle cx="9.500" cy="9.500" r="8" fill="#2a96e8"/><path d="M4 5a8 8 0 0 1 11 0" stroke="#8ccafc" stroke-width="2" fill="none"/><path d="M11.500 5.500l-4 4 4 4" fill="none" stroke="#fff" stroke-width="2.200"/></svg>
<svg class="abs" style="left:1143px;top:777px" width="16" height="17" viewBox="0 0 16 17"><rect x="6" y="1" width="9" height="7" fill="#b8d4f4" stroke="#2a4a9a" stroke-width="1"/><path d="M8 9.500h5v1.500H8z" fill="#d8d8e4"/><rect x="1" y="6" width="9" height="7" fill="#a8c8f0" stroke="#2a4a9a" stroke-width="1"/><path d="M3 14h5v2H3z" fill="#e4d8e8"/></svg>
<svg class="abs" style="left:1162px;top:776px" width="17" height="18" viewBox="0 0 17 18"><rect x="1" y="4" width="8.500" height="8" fill="#b8d4f4" stroke="#3a5aa8" stroke-width="1"/><path d="M3 13.500h5v2.500H3z" fill="#e0dce8"/><path d="M11 4.500a3 3 0 0 1 0 4.500M13 3a5 5 0 0 1 0 7.500M15 1.500a7 7 0 0 1 0 10.500" fill="none" stroke="#3fe23f" stroke-width="1.300"/></svg>
<div class="abs" style="left:1180px;top:777px;width:17px;height:17px;line-height:0"><svg width="17" height="17" viewBox="0 0 17 17"><rect x="1" y="1" width="14" height="13" rx="2" fill="#fdf6dc" stroke="#e0a030" stroke-width="1.200"/><circle cx="9" cy="9.500" r="6" fill="#fbd35a" stroke="#e88a18" stroke-width="1.300"/><path d="M6 8l3 3 3-3" fill="none" stroke="#b86008" stroke-width="1.300"/></svg></div>
<svg class="abs" style="left:1199px;top:776px" width="16" height="18" viewBox="0 0 16 18"><path d="M1.500 1.500c3 0 7 4 9.500 9l-3 2C5 8 2 5 1.500 1.500z" fill="#8a8e98" stroke="#1a1c24" stroke-width="1"/><path d="M8 12.500l3-2 3.500 5.500-2 .5z" fill="#3a6ad0" stroke="#101a40" stroke-width="0.800"/><path d="M5 11l2.500 1.500-1.500 3zM11 8l1 3 2.500-1z" fill="#1a1c24"/></svg>
<svg class="abs" style="left:1216px;top:777px" width="17" height="17" viewBox="0 0 17 17"><circle cx="8.500" cy="8.500" r="8" fill="#b8480c"/><circle cx="8.500" cy="8" r="6.800" fill="#f08a1c"/><path d="M12 6a4 4 0 1 0 .5 4.500H9" fill="none" stroke="#fff" stroke-width="2.200"/></svg>
<div class="t" style="left:1239px;top:778px;color:#fff;font-size:11.500px;letter-spacing:0.3px">11:19</div>
</body></html>
